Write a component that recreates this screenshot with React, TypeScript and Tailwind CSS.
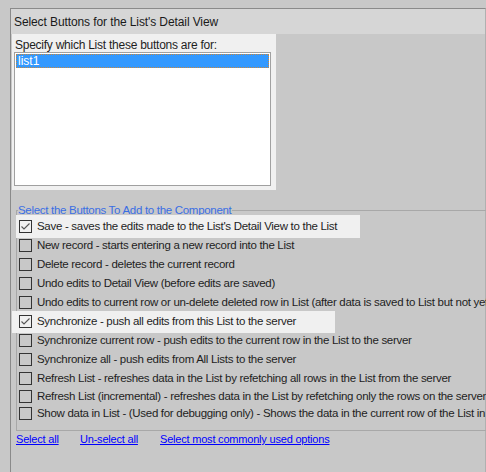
import React from "react";

type Option = { label: string; checked?: boolean; h: string; hl?: string };

const OPTIONS: Option[] = [
  {
    label: "Save - saves the edits made to the List's Detail View to the List",
    checked: true,
    h: "h-[19px]",
    hl: "-left-[1px] -top-[2px] h-[23px] w-[344px]",
  },
  { label: "New record - starts entering a new record into the List", h: "h-[19px]" },
  { label: "Delete record - deletes the current record", h: "h-[19px]" },
  { label: "Undo edits to Detail View (before edits are saved)", h: "h-[19px]" },
  {
    label: "Undo edits to current row or un-delete deleted row in List (after data is saved to List but not yet synchronized)",
    h: "h-[19px]",
  },
  {
    label: "Synchronize - push all edits from this List to the server",
    checked: true,
    h: "h-[19px]",
    hl: "-left-[5px] -top-[1px] h-[22px] w-[323px]",
  },
  { label: "Synchronize current row - push edits to the current row in the List to the server", h: "h-[19px]" },
  { label: "Synchronize all - push edits from All Lists to the server", h: "h-[19px]" },
  { label: "Refresh List - refreshes data in the List by refetching all rows in the List from the server", h: "h-[19px]" },
  {
    label: "Refresh List (incremental) - refreshes data in the List by refetching only the rows on the server that changed",
    h: "h-[17px]",
  },
  {
    label: "Show data in List - (Used for debugging only) - Shows the data in the current row of the List in a popup",
    h: "h-[17px]",
  },
];

const FONT = "font-['Liberation_Sans',Arial,sans-serif]";

function CheckBox({ checked }: { checked?: boolean }) {
  return (
    <span className="relative z-10 flex h-[13px] w-[13px] shrink-0 items-center justify-center border border-[#333333]">
      {checked && (
        <svg width="11" height="11" viewBox="0 0 11 11" fill="none">
          <path d="M1.5 5.5 L4 8 L9.5 2.5" stroke="#555555" strokeWidth="1.1" />
        </svg>
      )}
    </span>
  );
}

export default function App() {
  return (
    <div className={`h-[472px] w-[486px] overflow-hidden bg-[#c8c8c8] pl-[10px] pt-[8px] ${FONT}`}>
      <div className="h-full w-[476px] border-l border-r border-t border-[#8a8a8a] border-r-[#b0b0b0]">
        {/* title bar */}
        <div className="flex h-[25px] items-center bg-[#d6d6d6] pl-[3px] text-[12px] tracking-[-0.1px] text-[#1a1a1a]">
          Select Buttons for the List's Detail View
        </div>

        <div className="text-[#1e1e1e]">
          {/* list picker */}
          <div className="ml-[1px] h-[156px] w-[264px] bg-[#f0f0f0] px-[2px] pt-[4px]">
            <div className="h-[14px] pl-[1px] text-[12px] leading-[14px] tracking-[-0.25px]">
              Specify which List these buttons are for:
            </div>
            <div className="h-[134px] w-[257px] border border-[#a0a0a0] bg-white p-[1px]">
              <div className="flex h-[14px] items-center border border-dotted border-[#c9873e] bg-[#3399ff] pl-[1px] text-[12px] leading-[12px] text-white">
                list1
              </div>
            </div>
          </div>

          {/* button options */}
          <fieldset className="ml-[5px] mt-[13px] w-[480px] border-b border-l border-t border-[#a8a8a8] pb-[8px]">
            <legend className="ml-[1px] h-[14px] text-[11.5px] leading-[14px] tracking-[-0.3px] text-[#3a6ee4]">
              Select the Buttons To Add to the Component
            </legend>
            {OPTIONS.map((o) => (
              <div key={o.label} className={`relative flex items-center gap-[5px] pl-[2px] ${o.h}`}>
                {o.hl && <span className={`absolute bg-[#f0f0f0] ${o.hl}`} />}
                <CheckBox checked={o.checked} />
                <span className="relative z-10 whitespace-nowrap text-[11.5px] tracking-[-0.3px]">{o.label}</span>
              </div>
            ))}
          </fieldset>

          {/* links */}
          <div className="ml-[5px] mt-[1px] flex h-[15px] items-center text-[11px] tracking-[-0.2px]">
            <a href="#" className="w-[64px] text-[#0000ff] underline">
              Select all
            </a>
            <a href="#" className="w-[80px] text-[#0000ff] underline">
              Un-select all
            </a>
            <a href="#" className="text-[#0000ff] underline">
              Select most commonly used options
            </a>
          </div>
        </div>
      </div>
    </div>
  );
}
